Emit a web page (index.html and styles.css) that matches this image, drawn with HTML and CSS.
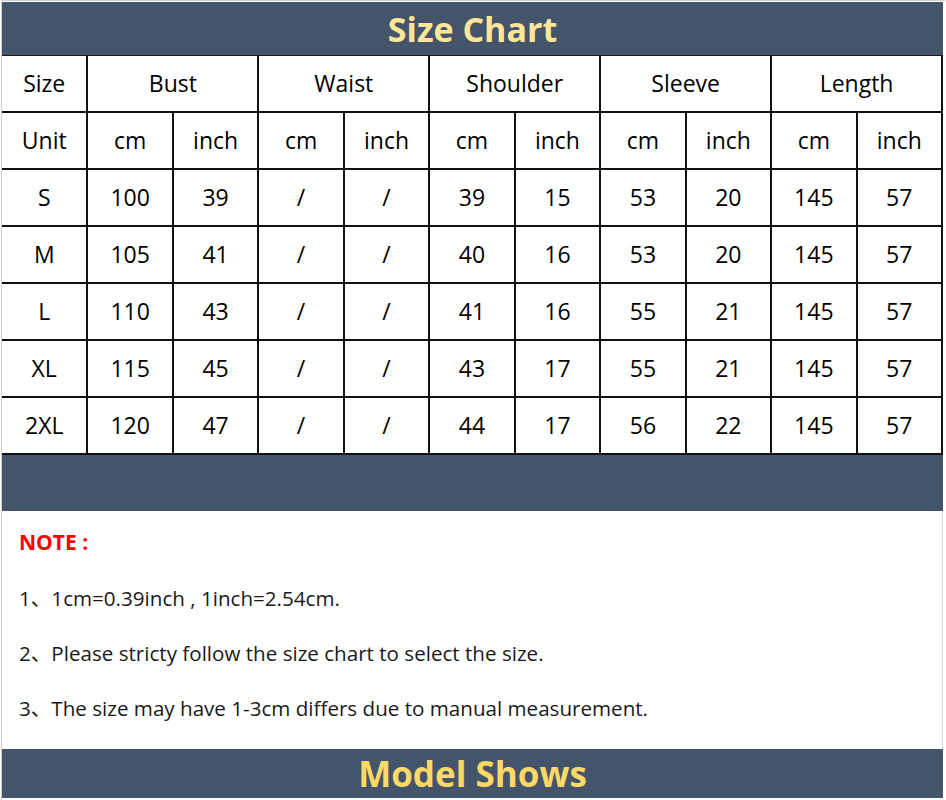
FILE: index.html
```html
<!DOCTYPE html>
<html>
<head>
<meta charset="utf-8">
<link rel="stylesheet" href="styles.css">
</head>
<body>
<div class="sheet">
  <div class="band title">Size Chart</div>
  <table class="chart">
    <colgroup>
      <col><col><col><col><col><col><col><col><col><col><col>
    </colgroup>
    <tr><td>Size</td><td colspan="2">Bust</td><td colspan="2">Waist</td><td colspan="2">Shoulder</td><td colspan="2">Sleeve</td><td colspan="2">Length</td></tr>
    <tr><td>Unit</td><td>cm</td><td>inch</td><td>cm</td><td>inch</td><td>cm</td><td>inch</td><td>cm</td><td>inch</td><td>cm</td><td>inch</td></tr>
    <tr><td>S</td><td>100</td><td>39</td><td>/</td><td>/</td><td>39</td><td>15</td><td>53</td><td>20</td><td>145</td><td>57</td></tr>
    <tr><td>M</td><td>105</td><td>41</td><td>/</td><td>/</td><td>40</td><td>16</td><td>53</td><td>20</td><td>145</td><td>57</td></tr>
    <tr><td>L</td><td>110</td><td>43</td><td>/</td><td>/</td><td>41</td><td>16</td><td>55</td><td>21</td><td>145</td><td>57</td></tr>
    <tr><td>XL</td><td>115</td><td>45</td><td>/</td><td>/</td><td>43</td><td>17</td><td>55</td><td>21</td><td>145</td><td>57</td></tr>
    <tr><td>2XL</td><td>120</td><td>47</td><td>/</td><td>/</td><td>44</td><td>17</td><td>56</td><td>22</td><td>145</td><td>57</td></tr>
  </table>
  <div class="band spacer"></div>
  <div class="notes">
    <div class="note-head">NOTE :</div>
    <div class="note-line">1、1cm=0.39inch , 1inch=2.54cm.</div>
    <div class="note-line">2、Please stricty follow the size chart to select the size.</div>
    <div class="note-line">3、The size may have 1-3cm differs due to manual measurement.</div>
  </div>
  <div class="band shows">Model Shows</div>
</div>
</body>
</html>
```

FILE: styles.css
```css
html, body {
  margin: 0;
  padding: 0;
  background: #ffffff;
}

body {
  width: 946px;
  height: 800px;
  overflow: hidden;
  font-family: "Open Sans", "Noto Sans CJK SC", sans-serif;
  color: #111111;
}

.sheet {
  margin-left: 1px;
  padding-top: 1px;
  width: 944px;
  border-left: 1px solid #d0d0d0;
  border-top: 1px solid #d0d0d0;
  min-height: 800px;
  box-sizing: border-box;
}

.band {
  width: 941px;
  background: #44546a;
  display: flex;
  align-items: center;
  justify-content: center;
  font-weight: 700;
}

.title {
  height: 53px;
  font-size: 34px;
  color: #ffe699;
  border-bottom: 1px solid #1a1a1a;
}

.chart {
  width: 941px;
  border-collapse: collapse;
  table-layout: fixed;
}

.chart td {
  height: 55px;
  padding: 0;
  border: 2px solid #111111;
  text-align: center;
  vertical-align: middle;
  font-size: 23px;
  line-height: 1;
  color: #000000;
}

.chart tr:first-child td {
  border-top: none;
}

.chart td:first-child {
  border-left: none;
}

.spacer {
  height: 56px;
}

.notes {
  width: 941px;
  height: 238px;
  box-sizing: border-box;
  padding: 3px 0 0 17px;
  display: flex;
  flex-direction: column;
  border-right: 1px solid #dcdcdc;
}

.note-head {
  height: 57px;
  line-height: 57px;
  font-size: 21px;
  font-weight: 700;
  color: #ff0000;
}

.note-line {
  height: 55px;
  line-height: 55px;
  font-size: 20.6px;
  color: #1a1a1a;
}

.shows {
  height: 49px;
  font-size: 35px;
  color: #ffd966;
}
```
